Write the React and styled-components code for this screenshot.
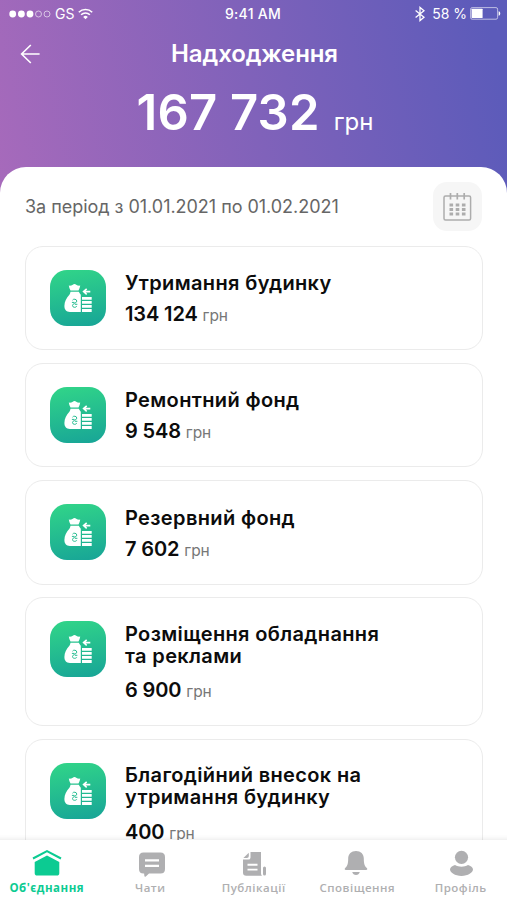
import React from 'react'
import styled, { createGlobalStyle } from 'styled-components'

const GlobalStyle = createGlobalStyle`
  * { box-sizing: border-box; }
  body {
    margin: 0;
    font-family: Inter, "Liberation Sans", sans-serif;
    background: #fff;
  }
`

const Screen = styled.div`
  display: flex;
  flex-direction: column;
  width: 507px;
  height: 900px;
  overflow: hidden;
  background: linear-gradient(78deg, #a76abb 0%, #8062ba 50%, #5c5bba 96%) top / 100% 200px no-repeat #fff;
`

const StatusBar = styled.div`
  display: grid;
  grid-template-columns: 1fr auto 1fr;
  align-items: center;
  height: 27px;
  padding: 0 6px 0 9px;
  color: #fff;
  font-size: 14px;
  line-height: 27px;
`

const StatusGroup = styled.div`
  display: flex;
  align-items: center;
  justify-content: ${props => props.$end ? 'flex-end' : 'flex-start'};
`

const StatusText = styled.span`
  margin: ${props => props.$margin || 0};
  font-weight: ${props => props.$weight || 400};
  letter-spacing: ${props => props.$spacing || 0};
`

const TitleBar = styled.div`
  display: grid;
  grid-template-columns: 60px 1fr 60px;
  align-items: center;
  height: 54px;
`

const BackButton = styled.button`
  display: flex;
  padding: 0 0 0 20px;
  border: 0;
  background: none;
`

const Title = styled.h1`
  margin: -1px 0 0;
  padding-left: 2px;
  color: #fff;
  font-size: 24px;
  font-weight: 600;
  letter-spacing: -0.1px;
  text-align: center;
`

const Total = styled.div`
  display: flex;
  justify-content: center;
  align-items: baseline;
  height: 86px;
  padding-left: 3px;
  color: #fff;
  font-size: 49px;
  font-weight: 600;
  line-height: 64px;
  letter-spacing: 0.2px;
`

const TotalUnit = styled.span`
  margin-left: 14px;
  font-size: 24px;
  font-weight: 400;
  letter-spacing: 0;
`

const Sheet = styled.main`
  flex: 1;
  min-height: 0;
  overflow: hidden;
  padding: 14.5px 25px 0;
  border-radius: 26px 26px 0 0;
  background: #fff;
`

const Period = styled.div`
  display: flex;
  justify-content: space-between;
  align-items: center;
  height: 49px;
  margin-bottom: 15px;
  color: #666;
  font-size: 18px;
`

const PeriodText = styled.span`
  letter-spacing: -0.03px;
`

const CalendarButton = styled.button`
  display: flex;
  justify-content: center;
  align-items: center;
  width: 49px;
  height: 49px;
  padding: 0;
  border: 0;
  border-radius: 14px;
  background: #f6f6f6;
`

const List = styled.div`
  display: flex;
  flex-direction: column;
  gap: 12.4px;
`

const Card = styled.div`
  display: flex;
  align-items: flex-start;
  flex: none;
  width: 457.5px;
  height: ${props => props.$tall ? '129.4px' : '104.8px'};
  padding: 24px;
  border: 1.5px solid #ebebeb;
  border-radius: 18px;
`

const CardIcon = styled.div`
  display: flex;
  flex: none;
  width: 56px;
  height: 56px;
  margin-right: 19px;
  margin-top: -1px;
  border-radius: 17px;
  background: linear-gradient(170deg, #30d389 5%, #17a497 100%);
`

const CardBody = styled.div`
  display: flex;
  flex-direction: column;
  gap: ${props => props.$tall ? '12.5px' : '9px'};
  margin-top: ${props => props.$tall ? '0.5px' : '1.8px'};
  color: #0c0c0c;
  font-size: 20px;
  font-weight: 600;
  line-height: 22px;
`

const CardName = styled.div`
  white-space: pre-line;
  letter-spacing: 0.36px;
`

const CardAmount = styled.div`
  letter-spacing: -0.12px;
`

const CardUnit = styled.span`
  color: #777;
  font-size: 15.5px;
  font-weight: 400;
`

const TabBar = styled.nav`
  display: grid;
  grid-template-columns: repeat(5, 103.5px);
  flex: none;
  height: 60px;
  margin: 0 -5px;
  background: #fff;
  box-shadow: 0 -1px 5px rgba(0, 0, 0, 0.09);
  z-index: 1;
`

const Tab = styled.div`
  display: flex;
  flex-direction: column;
  align-items: center;
  padding-top: 8px;
  color: ${props => props.$active ? '#0ccb92' : '#afafb1'};
  font-family: "Open Sans", sans-serif;
  font-size: 11.5px;
  font-weight: ${props => props.$active ? 700 : 600};
  line-height: 16px;
  letter-spacing: 0.5px;
  white-space: nowrap;

  svg {
    margin-bottom: 2px;
  }
`

const WifiIcon = () => (
  <svg width="15" height="12" viewBox="0 0 15 12" fill="none" stroke="#fff" strokeWidth="1.6">
    <path d="M0.8 4.2a9.6 9.6 0 0 1 13.4 0M3.1 6.8a6.3 6.3 0 0 1 8.8 0" />
    <path d="M7.5 11.2 5.2 8.9a3.3 3.3 0 0 1 4.6 0z" fill="#fff" stroke="none" />
  </svg>
)

const SignalIcon = () => (
  <svg width="43" height="8" viewBox="0 0 43 8" fill="#fff">
    <circle cx="3.7" cy="4" r="3.4" />
    <circle cx="12.4" cy="4" r="3.4" />
    <circle cx="21" cy="4" r="3.4" />
    <g fill="none" stroke="#fff" strokeWidth="0.8" opacity="0.75">
      <circle cx="29.5" cy="4" r="3" />
      <circle cx="38" cy="4" r="3" />
    </g>
  </svg>
)

const BluetoothIcon = () => (
  <svg width="10" height="16" viewBox="0 0 10 16" fill="none" stroke="#fff" strokeWidth="1.3">
    <path d="M0.6 4.6 9 11.2 5 14.6V1.4l4 3.3-8.4 6.7" />
  </svg>
)

const BatteryIcon = () => (
  <svg width="31" height="13" viewBox="0 0 31 13">
    <rect x="0.6" y="0.6" width="27" height="11.6" rx="1.6" fill="none" stroke="#fff" strokeWidth="0.8" opacity="0.75" />
    <rect x="1.6" y="1.7" width="11" height="9.4" rx="0.6" fill="#fff" />
    <path d="M28.6 4.2c2.2.6 2.2 3.9 0 4.5z" fill="#fff" />
  </svg>
)

const ArrowIcon = () => (
  <svg width="20" height="20" viewBox="0 0 20 20" fill="none" stroke="#fff" strokeWidth="1.6">
    <path d="M10.8 1 1.6 10l9.2 9M1.8 10h17.8" />
  </svg>
)

const CalendarIcon = () => (
  <svg width="29" height="29" viewBox="0 0 29 29" fill="none" stroke="#adadad" strokeWidth="1.5">
    <rect x="1" y="4" width="26.6" height="24" rx="1.5" />
    <path d="M7.5 1v6.5M14.3 1v6.5M21.2 1v6.5" strokeWidth="1.7" />
    <path d="M6.5 13h16M6.5 17.5h16M6.5 22h16" strokeWidth="3" strokeDasharray="3.6 2.6" />
  </svg>
)

const MoneyIcon = () => (
  <svg width="56" height="56" viewBox="0 0 56 56" fill="#fff">
    <path d="M18.8 15.6c1.700.2 2.800-.2 4-.9.9-.8 2.500-.8 3.400 0 1.200.7 2.300 1.100 4 .9-.2 1.800-.8 3.200-1.700 4.800h-8c-.9-1.600-1.500-3-1.700-4.800z" />
    <path d="M20.500 21.800h8.300c.5 1.200 1.200 2 2 2.900v17.200H20c-3.900 0-5.600-2.300-5.600-5.800 0-4.500 2-8.200 5-11.300.7-.8.900-1.900 1.100-3z" />
    <path d="M22.500 30.200c.7-1.600 4.300-1.300 4.300.9 0 2.300-4.300 2-4.300 4.500 0 2.200 3.600 2.200 4.300.6M21.900 32.400h2.600M24.800 34.300h2.600" fill="none" stroke="#27bd91" strokeWidth="1" />
    <path d="M32 27.100h9.700v2.700H32zM32 31.100h9.700v2.700H32zM32 35.100h9.700v2.700H32zM32 39.100h9.700v2.800H32z" />
    <path d="M36.700 18.900 33.600 21.600l3.100 2.700M34 21.600h6.300" fill="none" stroke="#fff" strokeWidth="1.600" />
  </svg>
)

const HomeIcon = () => (
  <svg width="30" height="30" viewBox="0 0 30 30" fill="currentColor">
    <path d="M1 10.500 15 3.200l14 7.300" fill="none" stroke="currentColor" strokeWidth="2" />
    <path d="M15 7.400 27.300 14V25q0 2.600-2.600 2.600H5.300q-2.600 0-2.600-2.600V14z" />
  </svg>
)

const ChatIcon = () => (
  <svg width="30" height="30" viewBox="0 0 30 30" fill="currentColor">
    <g transform="translate(1.500 0)">
      <path d="M7 4.500h17c3 0 4.500 1.500 4.500 4.500v12c0 3-1.500 4.500-4.500 4.500H12.500L9.300 28.400c-.8.600-1.300.3-1.400-.5l-.3-2.400H7c-3 0-4.500-1.500-4.500-4.500V9c0-3 1.500-4.500 4.500-4.500z" />
      <path d="M8.500 12.400h14M8.500 17.800h14" stroke="#fff" strokeWidth="2.200" />
    </g>
  </svg>
)

const NewsIcon = () => (
  <svg width="30" height="30" viewBox="0 0 30 30" fill="currentColor">
    <path d="M11.500 3.900H22v21.500c0 1 .4 1.800 1 2.300H7.200q-3.200 0-3.200-3.200V11.600h5.300q2.200 0 2.200-2.200z" />
    <path d="M9.800 4.700v3.400q0 1.900-1.900 1.900H4.400z" />
    <path d="M8.500 16.800h10M8.500 21.600h10" stroke="#fff" strokeWidth="1.900" />
    <rect x="24" y="18.500" width="3" height="9" rx="1.500" />
  </svg>
)

const BellIcon = () => (
  <svg width="30" height="30" viewBox="0 0 30 30" fill="currentColor">
    <path d="M14 3c4.700 0 7.800 3 7.800 7.500 0 5 .8 7.700 3 9.400 1 .9.600 2-.7 2H3.900c-1.300 0-1.700-1.100-.7-2 2.200-1.700 3-4.400 3-9.400C6.200 6 9.300 3 14 3z" />
    <path d="M10.200 24h7.600c-.6 1.900-1.900 3-3.800 3s-3.200-1.100-3.800-3z" />
  </svg>
)

const ProfileIcon = () => (
  <svg width="30" height="30" viewBox="0 0 30 30" fill="currentColor">
    <circle cx="15.500" cy="9.300" r="6.600" />
    <path d="M15.500 28C9 28 4 24.500 4 21.600c0-2.400 2.400-3.900 5-4.600 3.700 2.200 9.300 2.200 13 0 2.600.7 5 2.200 5 4.600 0 2.900-5 6.400-11.500 6.400z" />
  </svg>
)

const funds = [
  { name: 'Утримання будинку', amount: '134 124' },
  { name: 'Ремонтний фонд', amount: '9 548' },
  { name: 'Резервний фонд', amount: '7 602' },
  { name: 'Розміщення обладнання\nта реклами', amount: '6 900', tall: true },
  { name: 'Благодійний внесок на\nутримання будинку', amount: '400', tall: true },
]

const tabs = [
  { label: "Об'єднання", Icon: HomeIcon, active: true },
  { label: 'Чати', Icon: ChatIcon },
  { label: 'Публікації', Icon: NewsIcon },
  { label: 'Сповіщення', Icon: BellIcon },
  { label: 'Профіль', Icon: ProfileIcon },
]

const App = () => (
  <Screen>
    <GlobalStyle />
    <StatusBar>
      <StatusGroup>
        <SignalIcon />
        <StatusText $margin="0 4px 0 3px">GS</StatusText>
        <WifiIcon />
      </StatusGroup>
      <StatusText $weight={500} $spacing="0.3px" $margin="0 4px 0 0">9:41 AM</StatusText>
      <StatusGroup $end>
        <BluetoothIcon />
        <StatusText $margin="0 3px 0 7px">58 %</StatusText>
        <BatteryIcon />
      </StatusGroup>
    </StatusBar>
    <TitleBar>
      <BackButton><ArrowIcon /></BackButton>
      <Title>Надходження</Title>
    </TitleBar>
    <Total>167 732<TotalUnit>грн</TotalUnit></Total>
    <Sheet>
      <Period>
        <PeriodText>За період з 01.01.2021 по 01.02.2021</PeriodText>
        <CalendarButton><CalendarIcon /></CalendarButton>
      </Period>
      <List>
        {funds.map(({ name, amount, tall }) => (
          <Card key={name} $tall={tall}>
            <CardIcon><MoneyIcon /></CardIcon>
            <CardBody $tall={tall}>
              <CardName>{name}</CardName>
              <CardAmount>{amount} <CardUnit>грн</CardUnit></CardAmount>
            </CardBody>
          </Card>
        ))}
      </List>
    </Sheet>
    <TabBar>
      {tabs.map(({ label, Icon, active }) => (
        <Tab key={label} $active={active}>
          <Icon />
          {label}
        </Tab>
      ))}
    </TabBar>
  </Screen>
)

export default App
